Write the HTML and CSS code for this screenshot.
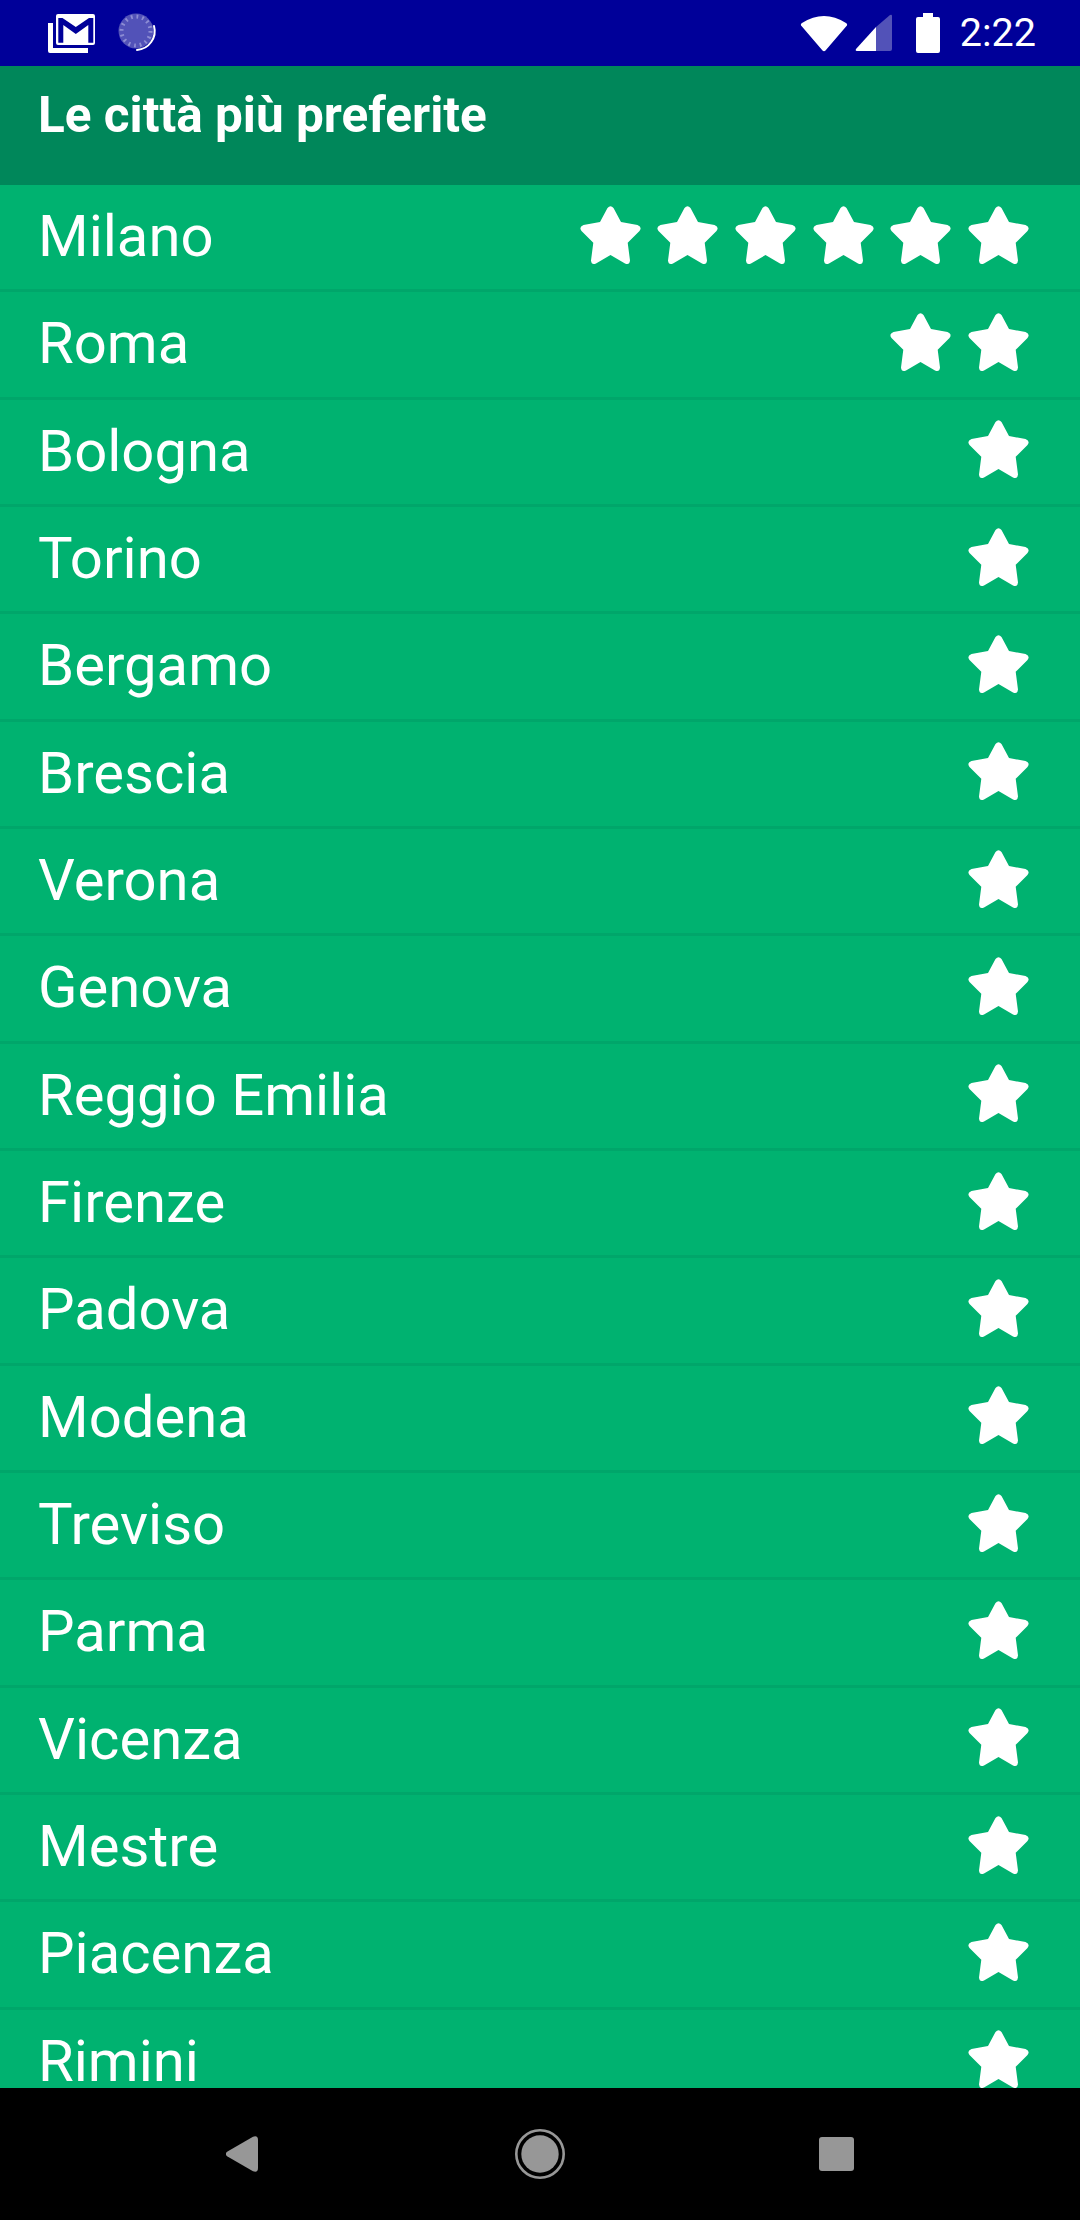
FILE: index.html
```html
<!DOCTYPE html>
<html lang="it">
<head>
<meta charset="utf-8">
<title>Le città più preferite</title>
<link rel="stylesheet" href="styles.css">
</head>
<body>
<svg class="defs" width="0" height="0" aria-hidden="true">
  <symbol id="star" viewBox="0 0 61 58" overflow="visible">
    <path d="M27.500 2 Q30.500 -1.500 33.500 2 L41 16 L57.500 19 Q62.500 21 59.500 25 L47.700 36.700 L50 54.500 Q49.500 59.500 45 57.500 L30.500 49 L16 57.500 Q11.500 59.500 11 54.500 L13.300 36.700 L1.500 25 Q-1.500 21 3.500 19 L20 16 Z"/>
  </symbol>
</svg>
<div class="phone">
  <header class="status">
    <div class="status-group status-left">
      <svg class="ic-mail" width="47" height="39" viewBox="0 0 47 39">
        <path class="white" d="M0 9 H5 V34 H40 V39 H2 Q0 39 0 37 Z"/>
        <path class="white" fill-rule="evenodd" d="M10 0 H45 Q47 0 47 2 V29 Q47 31 45 31 H10 Q8 31 8 29 V2 Q8 0 10 0 Z M10.300 28.700 H15.300 V11 L27.800 20 L40.300 11 V28.700 H45.300 V4 H41 L27.800 13 L14.500 4 H10.300 Z"/>
      </svg>
      <svg class="ic-sync" width="40" height="40" viewBox="0 0 40 40">
        <circle class="disc" cx="18" cy="18" r="17.500"/>
        <circle class="ticks" cx="18" cy="18" r="14.500"/>
        <path class="arc" d="M36 13 A19 19 0 0 1 19 37"/>
      </svg>
    </div>
    <div class="status-group status-right">
      <svg class="ic-wifi" width="48" height="38" viewBox="0 0 48 38">
        <path class="white" d="M2 9 Q24 -5 46 9 Q48 10.500 46.500 12 L25.500 36.500 Q24 38 22.500 36.500 L1.500 12 Q0 10.500 2 9 Z"/>
      </svg>
      <svg class="ic-signal" width="38" height="38" viewBox="0 0 38 38">
        <path class="dim" d="M21 13 L35 1 Q37 0 37 2 V35 Q37 37 35 37 H21 Z"/>
        <path class="white" d="M21 13 V37 H1.500 Q0 36.500 1 35 Z"/>
      </svg>
      <svg class="ic-battery" width="24" height="40" viewBox="0 0 24 40">
        <path class="white" d="M7 0 H17 V4 H22 Q24 4 24 6 V38 Q24 40 22 40 H2 Q0 40 0 38 V6 Q0 4 2 4 H7 Z"/>
      </svg>
      <span class="clock">2:22</span>
    </div>
  </header>
  <div class="appbar"><h1 class="appbar-title">Le città più preferite</h1></div>
  <main class="list">
    <div class="row"><span class="city">Milano</span><span class="stars"><svg class="star"><use href="#star"/></svg><svg class="star"><use href="#star"/></svg><svg class="star"><use href="#star"/></svg><svg class="star"><use href="#star"/></svg><svg class="star"><use href="#star"/></svg><svg class="star"><use href="#star"/></svg></span></div>
    <div class="row"><span class="city">Roma</span><span class="stars"><svg class="star"><use href="#star"/></svg><svg class="star"><use href="#star"/></svg></span></div>
    <div class="row"><span class="city">Bologna</span><span class="stars"><svg class="star"><use href="#star"/></svg></span></div>
    <div class="row"><span class="city">Torino</span><span class="stars"><svg class="star"><use href="#star"/></svg></span></div>
    <div class="row"><span class="city">Bergamo</span><span class="stars"><svg class="star"><use href="#star"/></svg></span></div>
    <div class="row"><span class="city">Brescia</span><span class="stars"><svg class="star"><use href="#star"/></svg></span></div>
    <div class="row"><span class="city">Verona</span><span class="stars"><svg class="star"><use href="#star"/></svg></span></div>
    <div class="row"><span class="city">Genova</span><span class="stars"><svg class="star"><use href="#star"/></svg></span></div>
    <div class="row"><span class="city">Reggio Emilia</span><span class="stars"><svg class="star"><use href="#star"/></svg></span></div>
    <div class="row"><span class="city">Firenze</span><span class="stars"><svg class="star"><use href="#star"/></svg></span></div>
    <div class="row"><span class="city">Padova</span><span class="stars"><svg class="star"><use href="#star"/></svg></span></div>
    <div class="row"><span class="city">Modena</span><span class="stars"><svg class="star"><use href="#star"/></svg></span></div>
    <div class="row"><span class="city">Treviso</span><span class="stars"><svg class="star"><use href="#star"/></svg></span></div>
    <div class="row"><span class="city">Parma</span><span class="stars"><svg class="star"><use href="#star"/></svg></span></div>
    <div class="row"><span class="city">Vicenza</span><span class="stars"><svg class="star"><use href="#star"/></svg></span></div>
    <div class="row"><span class="city">Mestre</span><span class="stars"><svg class="star"><use href="#star"/></svg></span></div>
    <div class="row"><span class="city">Piacenza</span><span class="stars"><svg class="star"><use href="#star"/></svg></span></div>
    <div class="row"><span class="city">Rimini</span><span class="stars"><svg class="star"><use href="#star"/></svg></span></div>
  </main>
  <nav class="navbar">
    <svg class="nav-back" width="32" height="36" viewBox="0 0 32 36"><path class="grey" d="M1.500 15.500 L27 0.700 Q32 -1 32 4 V32 Q32 37 27 35.300 L1.500 20.500 Q-2 18 1.500 15.500 Z"/></svg>
    <svg class="nav-home" width="50" height="50" viewBox="0 0 50 50"><circle class="home-ring" cx="25" cy="25" r="23.700"/><circle class="grey" cx="25" cy="25" r="18.700"/></svg>
    <svg width="35" height="34" viewBox="0 0 35 34"><rect class="grey" width="35" height="34" rx="3"/></svg>
  </nav>
</div>
</body>
</html>
```

FILE: styles.css
```css
* { box-sizing: border-box; }

html, body {
  margin: 0;
  padding: 0;
  background: #000;
}

.defs { position: absolute; }

.phone {
  width: 1080px;
  height: 2220px;
  display: flex;
  flex-direction: column;
  overflow: hidden;
  font-family: Roboto, "Liberation Sans", sans-serif;
  color: #fff;
}

.white { fill: #fff; }
.dim { fill: #5252b8; }
.grey { fill: #979797; }

/* Status bar */
.status {
  flex: 0 0 66px;
  background: #000099;
  display: flex;
  justify-content: space-between;
  align-items: center;
  padding: 0 44px 0 48px;
}

.status-group {
  display: flex;
  align-items: center;
}

.status-left { gap: 23px; }

.disc { fill: #5252b8; }
.ticks {
  fill: none;
  stroke: #8d8dd4;
  stroke-width: 4;
  stroke-dasharray: 1.800 3.900;
}
.arc {
  fill: none;
  stroke: #fff;
  stroke-width: 2;
  stroke-linecap: round;
}

.ic-wifi { margin-right: 7px; }
.ic-signal { margin-right: 23px; }
.ic-battery { margin-right: 20px; }

.clock {
  font-size: 39.500px;
  line-height: 40px;
}

/* App bar */
.appbar {
  flex: 0 0 119px;
  background: #00875a;
  padding: 17px 0 0 38px;
}

.appbar-title {
  margin: 0;
  font-size: 49.500px;
  line-height: 64px;
  font-weight: 700;
}

/* City list */
.list {
  flex: 0 0 1903px;
  background: #00b270;
  overflow: hidden;
}

.row {
  height: 107.330px;
  padding: 0 51px 5px 38px;
  display: flex;
  justify-content: space-between;
  align-items: center;
  border-bottom: 3px solid #00a66a;
}

.city {
  font-size: 58px;
  line-height: 56px;
  padding-top: 3px;
}

.stars {
  display: flex;
  gap: 16.670px;
}

.star {
  width: 61px;
  height: 58px;
  fill: #fff;
  display: block;
  overflow: visible;
}

/* Navigation bar */
.navbar {
  flex: 0 0 132px;
  background: #000;
  display: flex;
  justify-content: center;
  align-items: center;
}

.nav-back { margin-right: 257px; }
.nav-home { margin-right: 254px; }

.home-ring {
  fill: none;
  stroke: #979797;
  stroke-width: 2.600;
}
```
